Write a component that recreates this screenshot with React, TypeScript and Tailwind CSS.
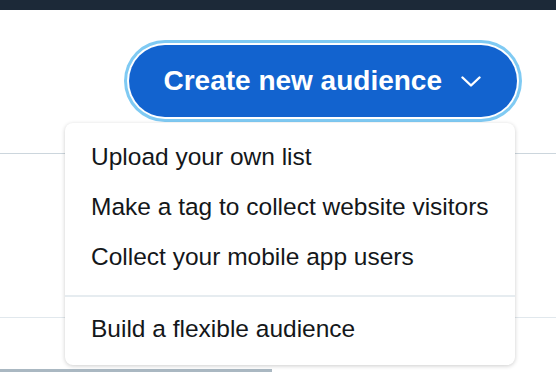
const menuItems = [
  'Upload your own list',
  'Make a tag to collect website visitors',
  'Collect your mobile app users',
];

function Chevron() {
  return (
    <svg width="20" height="11" viewBox="0 0 20 11" fill="none" className="block">
      <path d="M1.5 1.5 L10 9.5 L18.5 1.5" stroke="#fff" strokeWidth="2.4" strokeLinecap="round" strokeLinejoin="round" />
    </svg>
  );
}

export default function App() {
  return (
    <div className="w-[556px] h-[388px] bg-white overflow-hidden font-['Liberation_Sans',Arial,sans-serif]">
      <div className="h-[10px] bg-[#1c2938]" />

      <section className="flex justify-end pt-[35px] pr-[39px] pb-[36px] border-b border-[#ccd6dd]">
        <div className="relative">
          <button className="flex items-center gap-[19px] h-[72px] pl-[34px] pr-[36px] rounded-full bg-[#1263cf] text-white text-[28px] font-bold shadow-[0_0_0_2px_#fff,0_0_0_5px_#7fcaf3]">
            <span>Create new audience</span>
            <Chevron />
          </button>

          <div className="absolute right-[2px] top-[78px] w-[450px] rounded-[8px] bg-white shadow-[0_1px_4px_rgba(0,0,0,0.2)] pt-[9px] pb-[11px] text-[24.5px] text-[#14171a]">
            {menuItems.map((item) => (
              <div key={item} className="h-[50px] leading-[50px] pl-[26px] whitespace-nowrap">
                {item}
              </div>
            ))}
            <div className="mt-[13px] mb-[7px] h-[2px] bg-[#e6ecf0]" />
            <div className="h-[50px] leading-[50px] pl-[26px] whitespace-nowrap">Build a flexible audience</div>
          </div>
        </div>
      </section>

      <div className="h-[164px] border-b border-[#e1e8ed]" />
      <div className="h-[51px]" />
      <div className="h-[3px] w-[272px] bg-[#aab8c2]" />
    </div>
  );
}
